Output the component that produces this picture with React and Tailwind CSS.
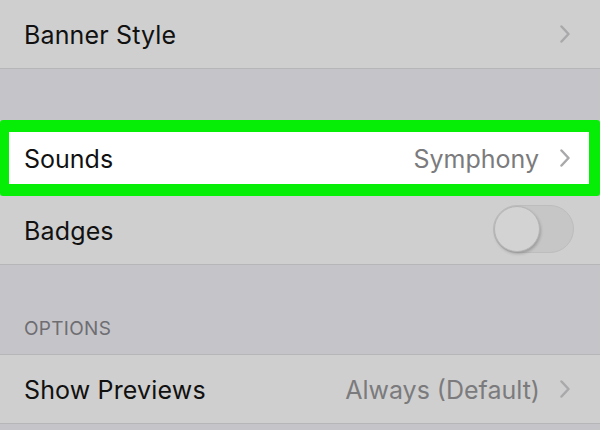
const Chevron = () => (
  <svg width="12" height="18" viewBox="0 0 12 18" className="shrink-0">
    <polyline points="2.5,1.5 9.5,9 2.5,16.5" fill="none" stroke="#a9a9ab" strokeWidth="2.5" strokeLinecap="round" strokeLinejoin="round" />
  </svg>
);

const Row = ({ label, value, chevron, children, className = "" }) => (
  <div className={`flex items-center justify-between pl-[24px] pr-[29px] bg-[#cfcfcf] ${className}`}>
    <span className="text-[25px] text-[#111111] tracking-[0.15px] pt-[3px]">{label}</span>
    <div className="flex items-center gap-[19px]">
      {value && <span className="text-[25px] text-[#7b7b7d] pt-[3px]">{value}</span>}
      {chevron && <Chevron />}
      {children}
    </div>
  </div>
);

const Toggle = () => (
  <div className="relative w-[81px] h-[48px] rounded-full bg-[#c6c6c7] border border-[#bdbdbe] mr-[-3px] mt-[-2px]">
    <div className="absolute left-0 top-0 w-[46px] h-[46px] rounded-full bg-[#d3d3d3] border border-[#b5b5b6] shadow-[1px_2px_3px_rgba(0,0,0,0.2)]" />
  </div>
);

export default function App() {
  return (
    <div className="w-[600px] h-[430px] overflow-hidden bg-[#c5c4c9] font-['Inter','Liberation_Sans',sans-serif]">
      <Row label="Banner Style" chevron className="h-[69px] border-b border-[#b6b6b9]" />

      <div className="h-[51px]" />

      <div className="h-[76px] border-t-[12px] border-b-[12px] border-l-[9px] border-r-[11px] border-[#06ee06] rounded-[3px] bg-white">
        <div className="h-full flex items-center justify-between pl-[15px] pr-[18px]">
          <span className="text-[25px] text-[#111111] pt-[3px]">Sounds</span>
          <div className="flex items-center gap-[20px]">
            <span className="text-[25px] text-[#7b7b7d] pt-[3px]">Symphony</span>
            <Chevron />
          </div>
        </div>
      </div>

      <Row label="Badges" className="h-[69px] border-b border-[#b6b6b9]">
        <Toggle />
      </Row>

      <div className="h-[89px] flex items-end pl-[24px] pb-[11px]">
        <span className="text-[19px] text-[#6e6e72] tracking-[0.3px]">OPTIONS</span>
      </div>

      <Row label="Show Previews" value="Always (Default)" chevron className="h-[70px] border-t border-b border-[#b6b6b9]" />
    </div>
  );
}
